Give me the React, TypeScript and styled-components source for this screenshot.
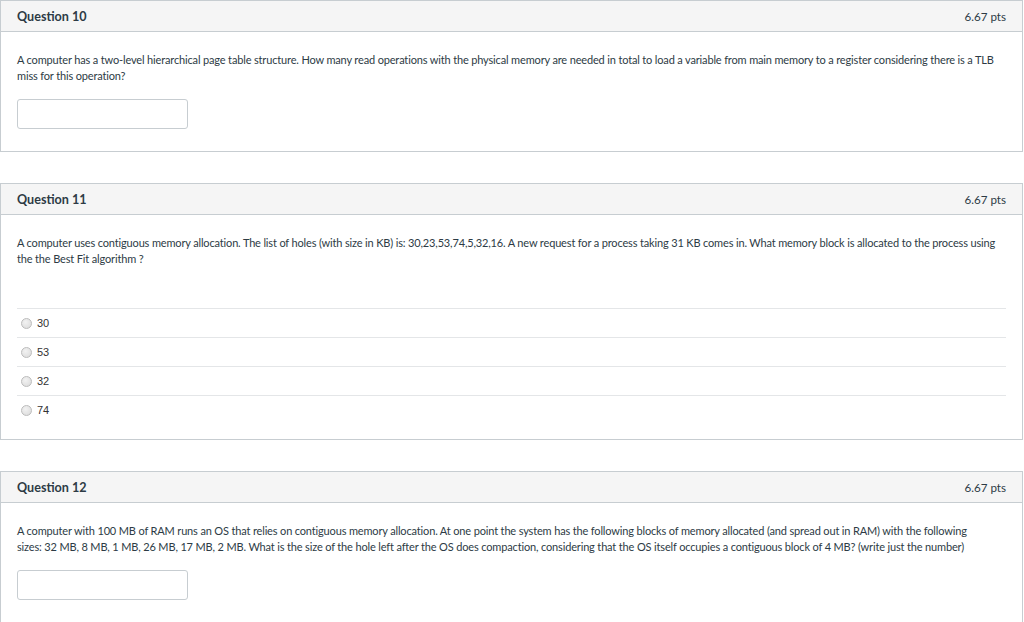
import React from 'react';
import styled, {createGlobalStyle} from 'styled-components';

const GlobalStyle = createGlobalStyle`
  body {
    margin: 0;
    background: #fff;
    font-family: Lato, "Open Sans", sans-serif;
    color: #2d3b45;
  }
`

type QuestionType = {
    title: string
    points: string
    text: string[]
    answers?: string[]
}

const questions: QuestionType[] = [
    {
        title: 'Question 10',
        points: '6.67 pts',
        text: [
            'A computer has a two-level hierarchical page table structure. How many read operations with the physical memory are needed in total to load a variable from main memory to a register considering there is a TLB',
            'miss for this operation?',
        ],
    },
    {
        title: 'Question 11',
        points: '6.67 pts',
        text: [
            'A computer uses contiguous memory allocation. The list of holes (with size in KB) is: 30,23,53,74,5,32,16. A new request for a process taking 31 KB comes in. What memory block is allocated to the process using',
            'the the Best Fit algorithm ?',
        ],
        answers: ['30', '53', '32', '74'],
    },
    {
        title: 'Question 12',
        points: '6.67 pts',
        text: [
            'A computer with 100 MB of RAM runs an OS that relies on contiguous memory allocation. At one point the system has the following blocks of memory allocated (and spread out in RAM) with the following',
            'sizes: 32 MB, 8 MB, 1 MB, 26 MB, 17 MB, 2 MB. What is the size of the hole left after the OS does compaction, considering that the OS itself occupies a contiguous block of 4 MB? (write just the number)',
        ],
    },
]

const Page = styled.div`
  display: flex;
  flex-direction: column;
  gap: 31px;
  width: 1023px;
`

const Card = styled.div`
  border: 1px solid #c7cdd1;
  background: #fff;
`

const Header = styled.div`
  display: flex;
  justify-content: space-between;
  align-items: center;
  height: 30px;
  padding: 0 16px;
  background: #f5f5f5;
  border-bottom: 1px solid #c7cdd1;
`

const Title = styled.div`
  font-size: 12.6px;
  font-weight: 700;
`

const Points = styled.div`
  font-size: 11.6px;
`

const Body = styled.div<{ $list: boolean }>`
  padding: 20px 16px ${p => p.$list ? '15px' : '22px'};
`

const Text = styled.div`
  font-size: 11px;
  letter-spacing: -0.155px;
  line-height: 16px;
  white-space: nowrap;
`

const Input = styled.div`
  width: 169px;
  height: 28px;
  margin-top: 15px;
  border: 1px solid #c7cdd1;
  border-radius: 3px;
  background: #fff;
`

const Answers = styled.div`
  margin-top: 41px;
`

const Answer = styled.div`
  display: flex;
  align-items: center;
  gap: 5px;
  height: 28px;
  padding-left: 4px;
  border-top: 1px solid #e4e6e8;
  font-family: "Liberation Sans", Arial, sans-serif;
  font-size: 11px;
  color: #333;
`

const Radio = styled.span`
  width: 9px;
  height: 9px;
  border-radius: 50%;
  border: 1px solid #bcbcbc;
  background: radial-gradient(circle at 40% 35%, #f2f2f2, #d9d9d9);
`

const Question: React.FC<{ q: QuestionType }> = ({q}) => {
    return (
        <Card>
            <Header>
                <Title>{q.title}</Title>
                <Points>{q.points}</Points>
            </Header>
            <Body $list={!!q.answers}>
                {q.text.map((line, i) => <Text key={i}>{line}</Text>)}
                {q.answers
                    ? <Answers>
                        {q.answers.map(a => (
                            <Answer key={a}>
                                <Radio/>
                                {a}
                            </Answer>
                        ))}
                    </Answers>
                    : <Input/>}
            </Body>
        </Card>
    )
}

export default function App() {
    return (
        <>
            <GlobalStyle/>
            <Page>
                {questions.map(q => <Question key={q.title} q={q}/>)}
            </Page>
        </>
    )
}
